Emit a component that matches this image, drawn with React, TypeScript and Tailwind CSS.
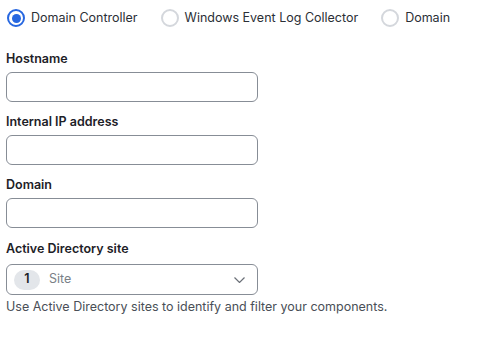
import { useState } from 'react';

const options = ['Domain Controller', 'Windows Event Log Collector', 'Domain'];

function Radio({ label, checked, onClick }: { label: string; checked: boolean; onClick: () => void }) {
  return (
    <button type="button" onClick={onClick} className="flex items-center gap-[6px] h-[18px]">
      {checked ? (
        <span className="w-[18px] h-[18px] rounded-full border-2 border-[#2767e0] flex items-center justify-center">
          <span className="w-[9px] h-[9px] rounded-full bg-[#2767e0]"></span>
        </span>
      ) : (
        <span className="w-[18px] h-[18px] rounded-full border-2 border-[#d4d7dc]"></span>
      )}
      <span className="text-[12.5px] text-[#2b2f36]">{label}</span>
    </button>
  );
}

function Field({ label }: { label: string }) {
  return (
    <div className="mb-[9px]">
      <label className="block pt-px text-[12.5px] leading-5 font-semibold text-[#1d2127] mb-[3px]">{label}</label>
      <input className="w-[252px] h-[30px] rounded-[6px] border border-[#878d96] bg-white px-2 text-[13px] outline-none" />
    </div>
  );
}

export default function App() {
  const [type, setType] = useState(0);

  return (
    <div className="bg-white w-[492px] h-[349px] pl-[6px] pt-[9px]" style={{ fontFamily: 'Inter, "Noto Sans", sans-serif' }}>
      <div className="flex items-center gap-[23px] pl-px mb-[21px]">
        {options.map((o, i) => (
          <Radio key={o} label={o} checked={type === i} onClick={() => setType(i)} />
        ))}
      </div>

      <Field label="Hostname" />
      <Field label="Internal IP address" />
      <Field label="Domain" />

      <label className="block pt-[2px] text-[12.5px] leading-5 font-semibold text-[#1d2127] mb-[5px]">Active Directory site</label>
      <div className="w-[252px] h-[31px] rounded-[6px] border border-[#878d96] flex items-center pl-[7px] pr-[12px]">
        <span className="w-[26px] h-[20px] rounded-full bg-[#e3e6ea] flex items-center justify-center text-[12.5px] font-semibold text-[#1d2127]">1</span>
        <span className="ml-[9px] text-[12.5px] text-[#7a7f87] flex-1">Site</span>
        <svg width="11" height="6" viewBox="0 0 11 6" fill="none">
          <path d="M0.5 0.5 L5.5 5.5 L10.5 0.5" stroke="#6b7078" strokeWidth="1.2" />
        </svg>
      </div>
      <p className="mt-1 text-[12.5px] leading-4 text-[#4a4f57]">Use Active Directory sites to identify and filter your components.</p>
    </div>
  );
}
